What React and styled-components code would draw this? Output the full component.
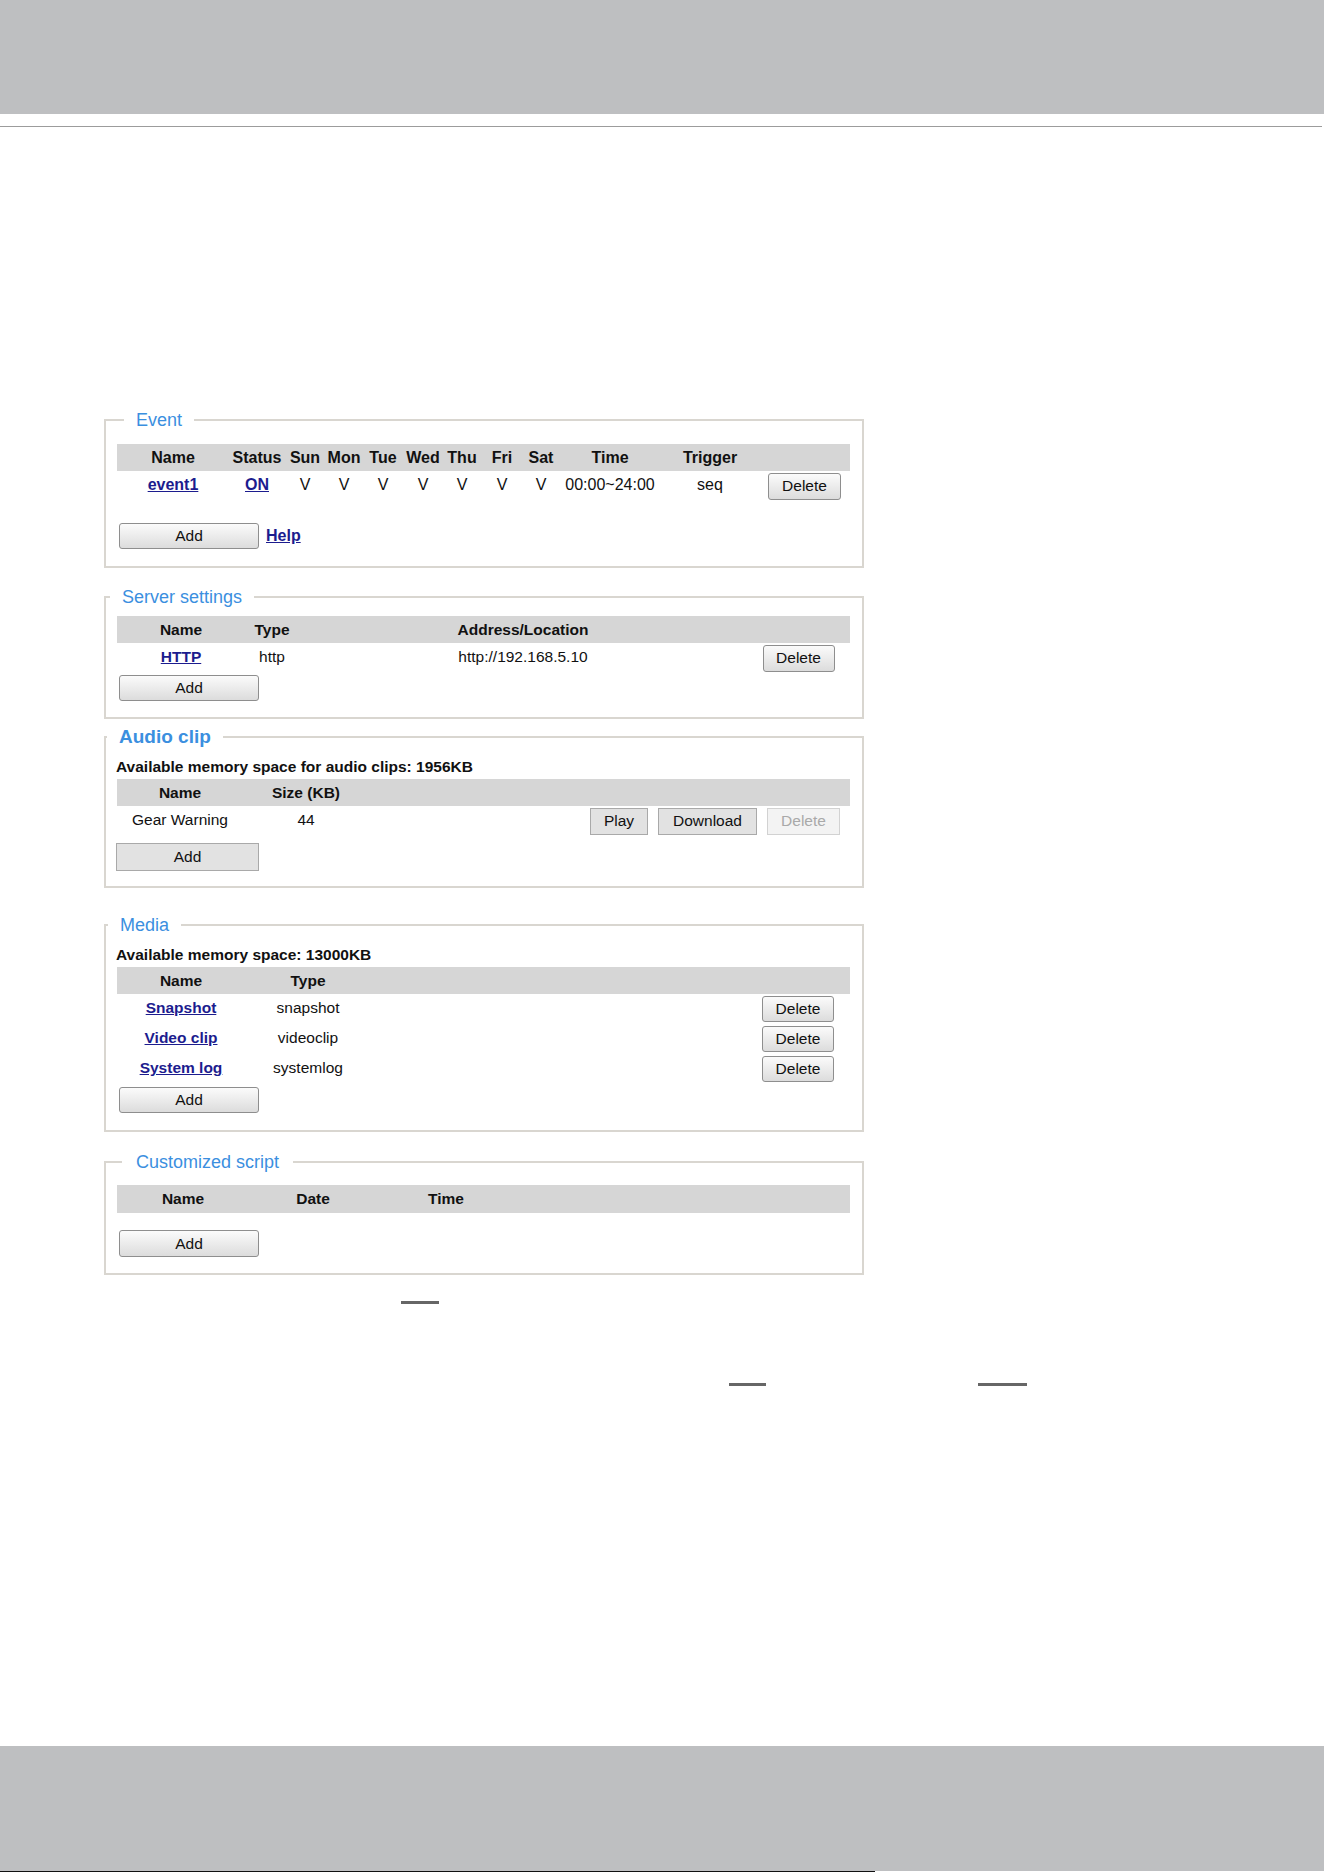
import styled, { createGlobalStyle, css } from "styled-components";

const GlobalStyle = createGlobalStyle`
  html, body {
    margin: 0;
    padding: 0;
    background: #fff;
  }
  body {
    font-family: "Liberation Sans", Arial, sans-serif;
    color: #111;
  }
`;

const Page = styled.div`
  width: 1324px;
  min-height: 1872px;
  display: flex;
  flex-direction: column;
`;

const TopBand = styled.div`
  height: 114px;
  background: #bebfc1;
`;

const TopRule = styled.div`
  margin-top: 12px;
  width: 1322px;
  height: 1px;
  background: #9c9c9c;
`;

const Content = styled.main`
  margin: 282px 0 0 104px;
  width: 760px;
  display: flex;
  flex-direction: column;
`;

const Box = styled.fieldset`
  margin: ${(p) => p.$mt || 0}px 0 0;
  padding: 0;
  border: 2px solid #d9d6d0;
  min-width: 0;
`;

const Legend = styled.legend`
  margin-left: ${(p) => p.$offset}px;
  padding: 0 ${(p) => p.$pad || 12}px;
  font-size: ${(p) => (p.$bold ? 19 : 18)}px;
  font-weight: ${(p) => (p.$bold ? 700 : 400)};
  line-height: 22px;
  color: #3b8fdf;
`;

const Body = styled.div`
  padding: ${(p) => p.$pt}px 12px ${(p) => p.$pb}px 11px;
  font-size: ${(p) => p.$fs || 15.5}px;
`;

const Note = styled.div`
  font-weight: 700;
  line-height: 20px;
  margin-left: -1px;
`;

const HeadRow = styled.div`
  display: grid;
  grid-template-columns: ${(p) => p.$cols};
  height: ${(p) => p.$h || 27}px;
  padding-top: 2px;
  box-sizing: border-box;
  align-items: center;
  background: #d6d6d6;
  font-weight: 700;
  margin-top: ${(p) => p.$mt || 0}px;
`;

const Row = styled.div`
  display: grid;
  grid-template-columns: ${(p) => p.$cols};
  height: ${(p) => p.$h || 30}px;
  align-items: center;
`;

const Cell = styled.div`
  text-align: center;
  white-space: nowrap;
  padding-bottom: 2px;
`;

const Actions = styled.div`
  display: flex;
  justify-content: ${(p) => (p.$end ? "flex-end" : "center")};
  gap: 10px;
  padding-right: ${(p) => p.$pr || 0}px;
`;

const Link = styled.a`
  color: #1c1c8e;
  font-weight: 700;
  text-decoration: underline;
  cursor: pointer;
`;

const Button = styled.button`
  width: ${(p) => p.$w}px;
  height: ${(p) => p.$h || 27}px;
  padding: 0;
  font-family: inherit;
  font-size: 15.5px;
  color: #111;
  border: 1px solid #8e8e8e;
  border-radius: 3px;
  background: linear-gradient(#fbfbfb, #dcdcdc);
  ${(p) =>
    p.$flat &&
    css`
      border-radius: 0;
      border-color: #a9a9a9;
      background: #e2e2e2;
    `}
  &:disabled {
    color: #a9a9a9;
    border-color: #d2d2d2;
    background: #f3f3f3;
  }
`;

const Footer = styled.div`
  display: flex;
  align-items: center;
  gap: 7px;
  margin-top: ${(p) => p.$mt || 0}px;
  padding-left: ${(p) => (p.$tight ? 0 : 2)}px;
  margin-left: ${(p) => (p.$tight ? -1 : 0)}px;
`;

/* redacted underline marks below the panels */
const Notes = styled.div`
  display: grid;
  grid-template-columns: 401px 38px 290px 37px 212px 49px;
  grid-template-rows: 3px 3px;
  row-gap: 79px;
  margin-top: 26px;
`;

const Dash = styled.span`
  display: block;
  height: 3px;
  background: #666;
  grid-column: ${(p) => p.$col};
  grid-row: ${(p) => p.$row};
`;

const BottomBand = styled.div`
  margin-top: auto;
  height: 125px;
  background: #bebfc1;
`;

const BottomRule = styled.div`
  width: 875px;
  height: 1px;
  background: #111;
`;

const eventCols = "112px 56px 40px 38px 40px 40px 38px 42px 36px 102px 98px 91px";
const serverCols = "128px 54px 448px 103px";
const audioCols = "126px 126px 1fr";
const mediaCols = "128px 126px 1fr";
const scriptCols = "132px 128px 138px 1fr";

const days = ["Sun", "Mon", "Tue", "Wed", "Thu", "Fri", "Sat"];

const mediaItems = [
  { name: "Snapshot", type: "snapshot" },
  { name: "Video clip", type: "videoclip" },
  { name: "System log", type: "systemlog" },
];

function EventBox() {
  return (
    <Box>
      <Legend $offset={18}>Event</Legend>
      <Body $pt={13} $pb={17} $fs={16}>
        <HeadRow $cols={eventCols}>
          <Cell>Name</Cell>
          <Cell>Status</Cell>
          {days.map((d) => (
            <Cell key={d}>{d}</Cell>
          ))}
          <Cell>Time</Cell>
          <Cell>Trigger</Cell>
          <Cell />
        </HeadRow>
        <Row $cols={eventCols}>
          <Cell>
            <Link>event1</Link>
          </Cell>
          <Cell>
            <Link>ON</Link>
          </Cell>
          {days.map((d) => (
            <Cell key={d}>V</Cell>
          ))}
          <Cell>00:00~24:00</Cell>
          <Cell>seq</Cell>
          <Actions>
            <Button $w={73}>Delete</Button>
          </Actions>
        </Row>
        <Footer $mt={22}>
          <Button $w={140} $h={26}>
            Add
          </Button>
          <Link>Help</Link>
        </Footer>
      </Body>
    </Box>
  );
}

function ServerBox() {
  return (
    <Box $mt={18}>
      <Legend $offset={4}>Server settings</Legend>
      <Body $pt={8} $pb={16}>
        <HeadRow $cols={serverCols}>
          <Cell>Name</Cell>
          <Cell>Type</Cell>
          <Cell>Address/Location</Cell>
          <Cell />
        </HeadRow>
        <Row $cols={serverCols}>
          <Cell>
            <Link>HTTP</Link>
          </Cell>
          <Cell>http</Cell>
          <Cell>http://192.168.5.10</Cell>
          <Actions>
            <Button $w={72}>Delete</Button>
          </Actions>
        </Row>
        <Footer $mt={2}>
          <Button $w={140} $h={26}>
            Add
          </Button>
        </Footer>
      </Body>
    </Box>
  );
}

function AudioBox() {
  return (
    <Box $mt={7}>
      <Legend $offset={1} $bold>
        Audio clip
      </Legend>
      <Body $pt={9} $pb={15}>
        <Note>Available memory space for audio clips: 1956KB</Note>
        <HeadRow $cols={audioCols} $mt={2}>
          <Cell>Name</Cell>
          <Cell>Size (KB)</Cell>
          <Cell />
        </HeadRow>
        <Row $cols={audioCols}>
          <Cell>Gear Warning</Cell>
          <Cell>44</Cell>
          <Actions $end $pr={10}>
            <Button $flat $w={58}>
              Play
            </Button>
            <Button $flat $w={99}>
              Download
            </Button>
            <Button $flat $w={73} disabled>
              Delete
            </Button>
          </Actions>
        </Row>
        <Footer $mt={7} $tight>
          <Button $flat $w={143} $h={28}>
            Add
          </Button>
        </Footer>
      </Body>
    </Box>
  );
}

function MediaBox() {
  return (
    <Box $mt={26}>
      <Legend $offset={2}>Media</Legend>
      <Body $pt={9} $pb={17}>
        <Note>Available memory space: 13000KB</Note>
        <HeadRow $cols={mediaCols} $mt={2}>
          <Cell>Name</Cell>
          <Cell>Type</Cell>
          <Cell />
        </HeadRow>
        {mediaItems.map((m) => (
          <Row key={m.name} $cols={mediaCols}>
            <Cell>
              <Link>{m.name}</Link>
            </Cell>
            <Cell>{m.type}</Cell>
            <Actions $end $pr={16}>
              <Button $w={72} $h={26}>
                Delete
              </Button>
            </Actions>
          </Row>
        ))}
        <Footer $mt={3}>
          <Button $w={140} $h={26}>
            Add
          </Button>
        </Footer>
      </Body>
    </Box>
  );
}

function ScriptBox() {
  return (
    <Box $mt={19}>
      <Legend $offset={16} $pad={14}>
        Customized script
      </Legend>
      <Body $pt={12} $pb={16}>
        <HeadRow $cols={scriptCols} $h={28}>
          <Cell>Name</Cell>
          <Cell>Date</Cell>
          <Cell>Time</Cell>
          <Cell />
        </HeadRow>
        <Footer $mt={17}>
          <Button $w={140} $h={27}>
            Add
          </Button>
        </Footer>
      </Body>
    </Box>
  );
}

export default function App() {
  return (
    <>
      <GlobalStyle />
      <Page>
        <TopBand />
        <TopRule />
        <Content>
          <EventBox />
          <ServerBox />
          <AudioBox />
          <MediaBox />
          <ScriptBox />
        </Content>
        <Notes>
          <Dash $col={2} $row={1} />
          <Dash $col={4} $row={2} />
          <Dash $col={6} $row={2} />
        </Notes>
        <BottomBand />
        <BottomRule />
      </Page>
    </>
  );
}
